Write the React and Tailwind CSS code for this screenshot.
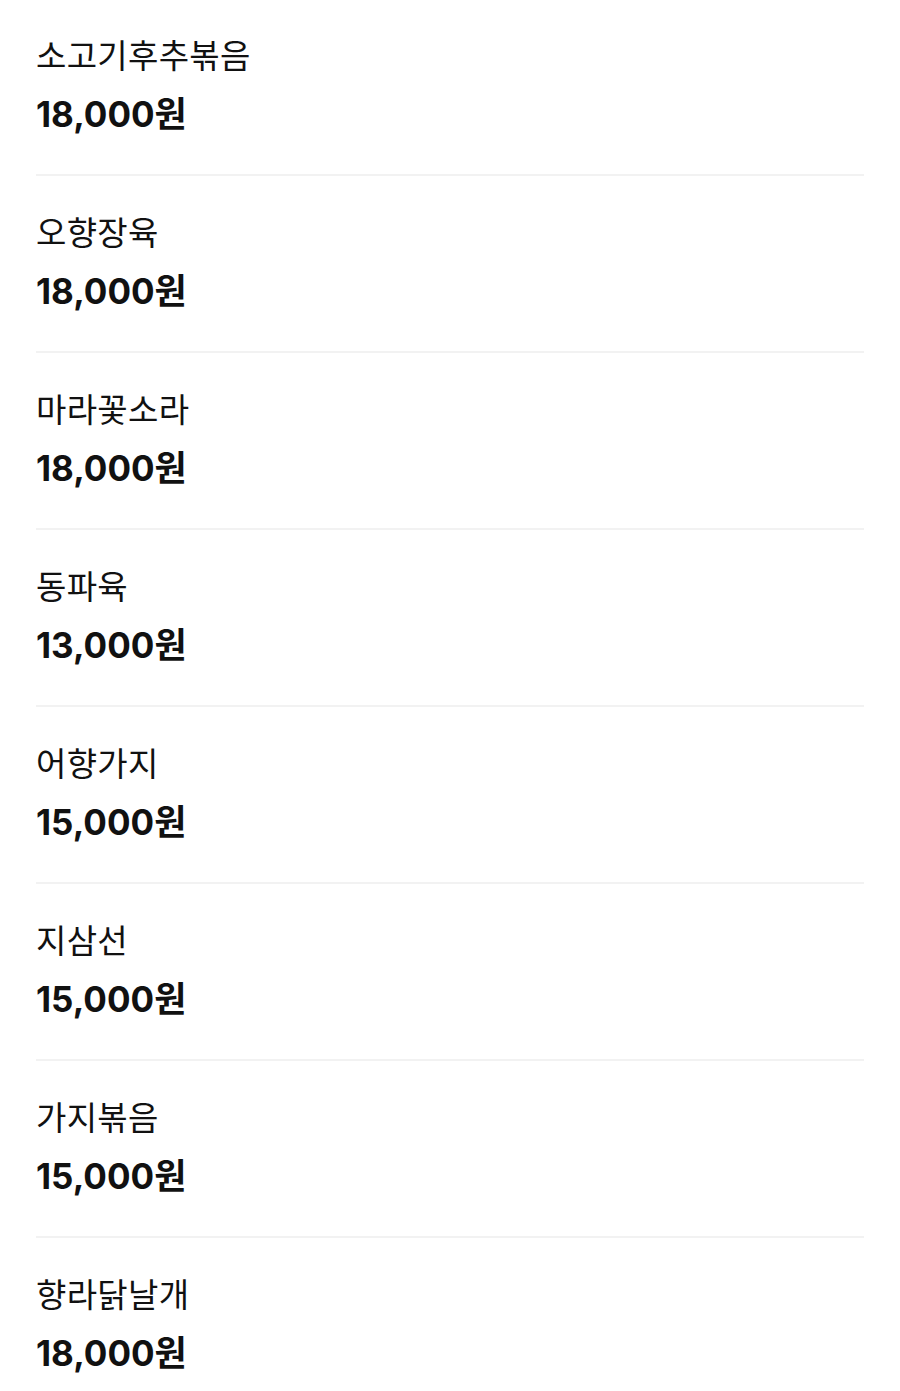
const menu = [
  { name: '소고기후추볶음', price: '18,000원' },
  { name: '오향장육', price: '18,000원' },
  { name: '마라꽃소라', price: '18,000원' },
  { name: '동파육', price: '13,000원' },
  { name: '어향가지', price: '15,000원' },
  { name: '지삼선', price: '15,000원' },
  { name: '가지볶음', price: '15,000원' },
  { name: '향라닭날개', price: '18,000원' },
]

export default function App() {
  return (
    <div
      className="min-h-screen bg-white px-[36px] text-[#111]"
      style={{ fontFamily: '"Noto Sans CJK KR", "Noto Sans", sans-serif' }}
    >
      {menu.map((item, i) => (
        <div
          key={i}
          className={`pb-[34px] ${i === 0 ? 'pt-[34px]' : 'pt-[35px]'} ${i < menu.length - 1 ? 'border-b-2 border-[#f2f2f2]' : ''}`}
        >
          <div className="text-[33px] leading-[40px] tracking-[0.3px]">{item.name}</div>
          <div
            className="mt-[14px] text-[35px] font-bold leading-[52px]"
            style={{ fontFamily: 'Inter, "Noto Sans CJK KR", sans-serif' }}
          >
            {item.price}
          </div>
        </div>
      ))}
    </div>
  )
}
